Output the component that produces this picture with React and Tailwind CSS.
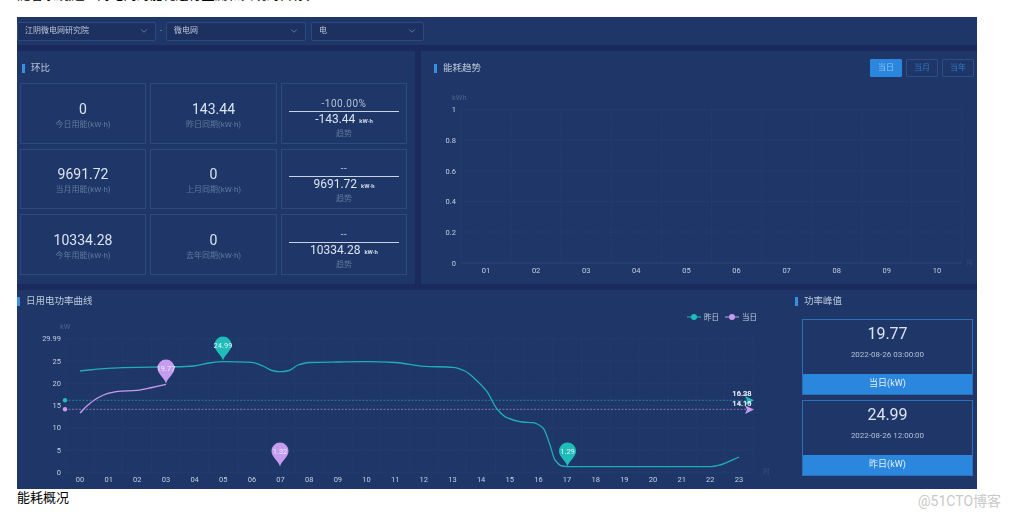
import React from 'react';
import { ChevronDown } from 'lucide-react';

const TEAL = '#1fbdb9';
const TEAL_LINE = '#20aeb6';
const PURPLE = '#c79cf0';
const GRID = '#2c4679';

const stats = [
  { value: '0', label: '今日用能(kW·h)', base: '143.44', baseLabel: '昨日同期(kW·h)', pct: '-100.00%', diff: '-143.44' },
  { value: '9691.72', label: '当月用能(kW·h)', base: '0', baseLabel: '上月同期(kW·h)', pct: '--', diff: '9691.72' },
  { value: '10334.28', label: '今年用能(kW·h)', base: '0', baseLabel: '去年同期(kW·h)', pct: '--', diff: '10334.28' },
];

// page coordinates read off the reference
const yesterday = [
  [80, 371], [108, 368.3], [137, 367.3], [166, 367], [194, 366], [209, 363], [223, 361.7], [252, 362.3],
  [263, 366], [272, 370.5], [280, 371.7], [289, 370.5], [298, 365], [309, 362.5], [338, 362], [367, 361.7],
  [395, 362.5], [424, 366.3], [453, 367.3], [465, 371], [475, 379], [487, 391.7], [497, 409], [507, 417.7],
  [522, 422], [533, 422.7], [543, 428], [550, 445], [555, 460], [562, 466], [570, 466.7], [596, 466.7],
  [625, 466.7], [653, 466.7], [682, 466.7], [710, 466.7], [720, 465], [739, 457],
];
const today = [[80, 413], [88, 405], [98, 397.7], [108, 393.3], [118, 391.3], [137, 390.3], [152, 387.5], [166, 384.3]];

// monotone cubic, close to how echarts draws a smooth line
const smooth = (pts) => {
  const secant = (i) => (pts[i + 1][1] - pts[i][1]) / (pts[i + 1][0] - pts[i][0]);
  const slopes = pts.map((p, i) => {
    if (i === 0) return secant(0);
    if (i === pts.length - 1) return secant(i - 1);
    const a = secant(i - 1);
    const b = secant(i);
    return a * b <= 0 ? 0 : (2 * a * b) / (a + b);
  });
  let d = `M${pts[0][0]} ${pts[0][1]}`;
  for (let i = 1; i < pts.length; i++) {
    const dx = (pts[i][0] - pts[i - 1][0]) / 3;
    d += ` C${pts[i - 1][0] + dx} ${pts[i - 1][1] + slopes[i - 1] * dx} ${pts[i][0] - dx} ${pts[i][1] - slopes[i] * dx} ${pts[i][0]} ${pts[i][1]}`;
  }
  return d;
};

const Title = ({ children, className = '' }) => (
  <div className={`flex items-center gap-[6px] text-[9.5px] text-[#bcc8da] ${className}`}>
    <span className="h-[9px] w-[3px] bg-[#3b8fe0]" />
    {children}
  </div>
);

const Select = ({ label, width }) => (
  <div className={`flex h-[19px] ${width} items-center justify-between rounded-[2px] border border-[#2d4a80] bg-[#1c3160] pl-[7px] pr-[6px] text-[8px] text-[#bcc8dc]`}>
    {label}
    <ChevronDown size={10} className="text-[#6f86ad]" />
  </div>
);

const StatCard = ({ value, label }) => (
  <div className="flex flex-col items-center justify-center border border-[#2c4a7c] pt-[2px]">
    <div className="text-[14px] leading-[21px] text-[#dbe3ee]">{value}</div>
    <div className="text-[8px] leading-[10px] text-[#5f7a9c]">{label}</div>
  </div>
);

const TrendCard = ({ pct, diff }) => (
  <div className="flex flex-col items-center justify-end border border-[#2c4a7c] pb-[4px]">
    <div className="text-[10px] leading-[13px] tracking-[0.5px] text-[#b4c0d4]">{pct}</div>
    <div className="mt-[1px] h-px w-[110px] bg-[#c8d3e2]" />
    <div className="flex items-baseline gap-1 text-[12px] leading-[14px] text-[#dbe3ee]">
      {diff}
      <span className="text-[6px] font-semibold">kW·h</span>
    </div>
    <div className="mt-[1px] text-[8px] leading-[10px] text-[#5f7a9c]">趋势</div>
  </div>
);

const RangeButton = ({ label, active }) => (
  <div
    className={`flex h-[18px] w-[32px] items-center justify-center rounded-[1px] border text-[8px] ${
      active ? 'border-[#2b87dd] bg-[#2b87dd] text-[#8fc4f2]' : 'border-[#2f4d82] text-[#2f78c4]'
    }`}
  >
    {label}
  </div>
);

const TrendChart = () => {
  const xs = Array.from({ length: 11 }, (_, i) => 461 + i * 50.1);
  const ys = [109.5, 140, 171, 201.5, 232, 263];
  const yLabels = ['1', '0.8', '0.6', '0.4', '0.2', '0'];
  return (
    <svg viewBox="421 85 556 199" className="mt-auto block h-[199px] w-[556px]">
      {xs.map((x) => (
        <line key={x} x1={x} x2={x} y1={109.5} y2={263} stroke={GRID} strokeWidth="0.5" strokeDasharray="1.5 1.5" />
      ))}
      {ys.map((y, i) => (
        <line key={y} x1={461} x2={962} y1={y} y2={y} stroke={i === 5 ? '#35507f' : GRID} strokeWidth="0.6" strokeDasharray={i === 5 ? undefined : '1.5 1.5'} />
      ))}
      <text x={452} y={100} fontSize="7.5" fill="#4a6389">kWh</text>
      <text x={966} y={265} fontSize="7" fill="#2f4b79">月</text>
      {yLabels.map((t, i) => (
        <text key={t} x={456} y={ys[i] + 2.5} fontSize="7.5" textAnchor="end" fill="#c5cfdf">{t}</text>
      ))}
      {Array.from({ length: 10 }, (_, i) => (
        <text key={i} x={486 + i * 50.1} y={273} fontSize="7.5" textAnchor="middle" fill="#c5cfdf">
          {String(i + 1).padStart(2, '0')}
        </text>
      ))}
    </svg>
  );
};

const Pin = ({ x, cy, color, label }) => (
  <g>
    <path d={`M${x} ${cy + 15.5} C${x - 1.5} ${cy + 10} ${x - 8.5} ${cy + 6} ${x - 8.5} ${cy} A8.5 8.5 0 1 1 ${x + 8.5} ${cy} C${x + 8.5} ${cy + 6} ${x + 1.5} ${cy + 10} ${x} ${cy + 15.5} Z`} fill={color} />
    <text x={x} y={cy + 2.5} fontSize="7.5" textAnchor="middle" fill="#e6eef8">{label}</text>
  </g>
);

const PowerChart = () => {
  const xs = Array.from({ length: 25 }, (_, i) => 65.4 + i * 28.67);
  const ys = [338.8, 361, 383.3, 405.5, 427.7, 450, 472.2];
  const yLabels = ['29.99', '25', '20', '15', '10', '5', '0'];
  return (
    <svg viewBox="17 310 760 179" className="block h-[179px] w-[760px]">
      {xs.map((x) => (
        <line key={x} x1={x} x2={x} y1={338.8} y2={472.2} stroke={GRID} strokeWidth="0.5" strokeDasharray="1.5 1.5" />
      ))}
      {ys.map((y) => (
        <line key={y} x1={65} x2={754} y1={y} y2={y} stroke={GRID} strokeWidth="0.6" strokeDasharray="1.5 1.5" />
      ))}
      <text x={60} y={329} fontSize="7.5" fill="#4a6389">kW</text>
      <text x={763} y={474} fontSize="7" fill="#33507e">时</text>
      {yLabels.map((t, i) => (
        <text key={t} x={61} y={ys[i] + 2.5} fontSize="7.5" textAnchor="end" fill="#c5cfdf">{t}</text>
      ))}
      {Array.from({ length: 24 }, (_, i) => (
        <text key={i} x={80 + i * 28.65} y={482} fontSize="7.5" textAnchor="middle" fill="#c5cfdf">
          {String(i).padStart(2, '0')}
        </text>
      ))}

      <line x1={65} x2={749} y1={400.3} y2={400.3} stroke={TEAL_LINE} strokeWidth="0.6" strokeDasharray="2 1.5" />
      <line x1={65} x2={749} y1={409.3} y2={409.3} stroke={PURPLE} strokeWidth="0.6" strokeDasharray="2 1.5" />
      <circle cx={65} cy={400.3} r={2.2} fill={TEAL} />
      <circle cx={65} cy={409.3} r={2.2} fill={PURPLE} />
      <path d="M745 405.5 L754 400.3 L745 396 L747 400.3 Z" fill={TEAL} />
      <path d="M745 414 L754 409.6 L745 405.5 L747 409.6 Z" fill={PURPLE} />

      <path d={smooth(yesterday)} fill="none" stroke={TEAL_LINE} strokeWidth="1.3" />
      <path d={smooth(today)} fill="none" stroke={PURPLE} strokeWidth="1.3" />

      <Pin x={223} cy={345} color={TEAL} label="24.99" />
      <Pin x={166} cy={368} color={PURPLE} label="19.77" />
      <Pin x={280} cy={451} color={PURPLE} label="1.32" />
      <Pin x={567.5} cy={451} color={TEAL} label="1.29" />

      <g fontSize="7.5" fontWeight="600" fill="#d5dce6" textAnchor="middle">
        <text x={742} y={395.5}>16.28</text>
        <text x={742} y={395.5}>16.38</text>
        <text x={742} y={405.5}>14.16</text>
        <text x={742} y={405.5}>14.19</text>
      </g>

      <g fontSize="7.5" fill="#c5cfdf">
        <line x1={687} x2={701} y1={317} y2={317} stroke={TEAL} strokeWidth="1" />
        <circle cx={694} cy={317} r={3} fill={TEAL} />
        <text x={704} y={319.5}>昨日</text>
        <line x1={725} x2={739} y1={317} y2={317} stroke={PURPLE} strokeWidth="1" />
        <circle cx={732} cy={317} r={3} fill={PURPLE} />
        <text x={742} y={319.5}>当日</text>
      </g>
    </svg>
  );
};

const PeakCard = ({ value, time, label }) => (
  <div className="flex h-[76px] w-[171px] flex-col border border-[#2a6fb8]">
    <div className="flex flex-1 flex-col items-center pt-[2px]">
      <div className="text-[16px] leading-[24px] text-[#dbe3ee]">{value}</div>
      <div className="mt-[3px] text-[8px] leading-[12px] text-[#b4c0d4]">{time}</div>
    </div>
    <div className="flex h-[20px] items-center justify-center bg-[#2b87dd] text-[9px] text-[#e4effa]">{label}</div>
  </div>
);

export default function App() {
  return (
    <div className="relative h-[518px] w-[1015px] overflow-hidden bg-white font-['Roboto','Noto_Sans_CJK_SC',sans-serif]">
      <div className="mt-[-12px] h-[29px] whitespace-nowrap pl-[17px] text-[13px] leading-[14px] text-black">
        随着系统,通过对电网的能耗进行监测和实现的目标。
      </div>

      <div className="ml-[17px] flex h-[472px] w-[960px] flex-col gap-[6px] bg-[#1b2a5c] blur-[0.4px]">
        <div className="flex h-[28px] items-center bg-[#1f3768]">
          <Select label="江阴微电网研究院" width="w-[139px]" />
          <span className="w-[10px] text-center text-[8px] text-[#8ea1c2]">-</span>
          <Select label="微电网" width="w-[140px]" />
          <div className="w-[5px]" />
          <Select label="电" width="w-[113px]" />
        </div>

        <div className="flex h-[233px] gap-[6px]">
          <div className="w-[398px] bg-[#1f3768] px-[3px]">
            <Title className="ml-[2px] h-[32px] pt-[2px]">环比</Title>
            <div className="grid h-[192px] w-[387px] grid-cols-[126px_127px_126px] grid-rows-3 gap-x-[4px] gap-y-[5px]">
              {stats.map((s) => (
                <React.Fragment key={s.label}>
                  <StatCard value={s.value} label={s.label} />
                  <StatCard value={s.base} label={s.baseLabel} />
                  <TrendCard pct={s.pct} diff={s.diff} />
                </React.Fragment>
              ))}
            </div>
          </div>

          <div className="flex w-[556px] flex-col bg-[#1f3768]">
            <div className="flex h-[34px] items-center justify-between pl-[13px] pr-[3px]">
              <Title>能耗趋势</Title>
              <div className="flex gap-[4px]">
                <RangeButton label="当日" active />
                <RangeButton label="当月" />
                <RangeButton label="当年" />
              </div>
            </div>
            <TrendChart />
          </div>
        </div>

        <div className="flex h-[199px] bg-[#1f3768]">
          <div className="w-[760px]">
            <Title className="h-[20px] pt-[2px]">日用电功率曲线</Title>
            <PowerChart />
          </div>
          <div className="flex-1">
            <Title className="ml-[18px] h-[20px] pt-[2px]">功率峰值</Title>
            <div className="ml-[25px] mt-[9px] flex flex-col gap-[5px]">
              <PeakCard value="19.77" time="2022-08-26 03:00:00" label="当日(kW)" />
              <PeakCard value="24.99" time="2022-08-26 12:00:00" label="昨日(kW)" />
            </div>
          </div>
        </div>
      </div>

      <div className="ml-[17px] mt-[1px] text-[13px] leading-[16px] text-black">能耗概况</div>
      <div className="absolute left-[918px] top-[492px] text-[14px] leading-[18px] text-[#c9c9c9]">@51CTO博客</div>
    </div>
  );
}
